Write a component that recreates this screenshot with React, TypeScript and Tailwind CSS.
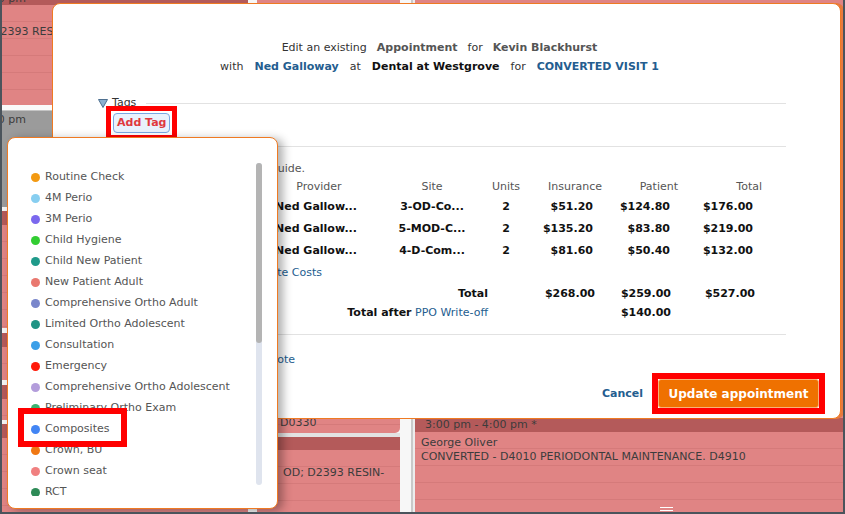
import React from "react";

const PINK =
  "bg-[repeating-linear-gradient(to_bottom,#e08484_0px,#e08484_16px,#d57a7a_16px,#d57a7a_17px)]";

const tags: [string, string][] = [
  ["Routine Check", "bg-[#f39a12]"],
  ["4M Perio", "bg-[#87cef0]"],
  ["3M Perio", "bg-[#7b68ee]"],
  ["Child Hygiene", "bg-[#32cd32]"],
  ["Child New Patient", "bg-[#1f9a8a]"],
  ["New Patient Adult", "bg-[#e9786f]"],
  ["Comprehensive Ortho Adult", "bg-[#7986cb]"],
  ["Limited Ortho Adolescent", "bg-[#1f9384]"],
  ["Consultation", "bg-[#3b9fe8]"],
  ["Emergency", "bg-[#ff1a0a]"],
  ["Comprehensive Ortho Adolescent", "bg-[#b39ddb]"],
  ["Preliminary Ortho Exam", "bg-[#3cb371]"],
  ["Composites", "bg-[#4285f4]"],
  ["Crown, BU", "bg-[#f07814]"],
  ["Crown seat", "bg-[#f08080]"],
  ["RCT", "bg-[#2e8b57]"],
  ["Bridge", "bg-[#9c27b0]"],
];

const rows = [
  ["D2391", "Ned Gallow...", "3-OD-Co...", "2", "$51.20", "$124.80", "$176.00"],
  ["D2392", "Ned Gallow...", "5-MOD-C...", "2", "$135.20", "$83.80", "$219.00"],
  ["D2391", "Ned Gallow...", "4-D-Com...", "2", "$81.60", "$50.40", "$132.00"],
];

function Background() {
  return (
    <div className="flex h-full text-[11px] leading-[14px] text-[#3c3c3c]">
      {/* column A1 */}
      <div className="w-[246px] flex flex-col">
        <div className="h-[5px] bg-[#b45a5a] overflow-hidden">
          <div className="-mt-[8px] -ml-[22px] whitespace-nowrap">3:00 pm *</div>
        </div>
        <div className={`h-[100px] ${PINK} pt-[20px] overflow-hidden`}>
          <div className="-ml-[10px] whitespace-nowrap">D2393 RESIN-BASED COMPOSITE</div>
        </div>
        <div className="h-[6px] bg-[#fafafa] border-b border-[#c4c4c4]" />
        <div className="h-[96px] bg-[#9b9b9b] pt-[2px] overflow-hidden">
          <div className="-ml-[22px] whitespace-nowrap">3:00 pm</div>
        </div>
        <div className="h-[4px] bg-[#f4f4f4]" />
        <div className="h-[14px] bg-[#b45a5a]" />
        <div className={`h-[103px] ${PINK}`} />
        <div className="h-[5px] bg-[#f4f4f4]" />
        <div className="h-[14px] bg-[#b45a5a]" />
        <div className={`h-[33px] ${PINK}`} />
        <div className="h-[5px] bg-[#f4f4f4]" />
        <div className="h-[14px] bg-[#b45a5a]" />
        <div className={`h-[21px] ${PINK}`} />
        <div className="h-[4px] bg-[#f4f4f4]" />
        <div className="h-[14px] bg-[#b45a5a]" />
        <div className={`flex-1 ${PINK}`} />
      </div>
      {/* separator */}
      <div className="w-[9px] bg-[#f6f6f6]" />
      {/* column A2 */}
      <div className="w-[143px] flex flex-col bg-[#f7f7f7]">
        <div className={`h-[433px] ${PINK} rounded-br-[5px] flex flex-col justify-end pb-[3px] pl-[23px]`}>
          <div className="whitespace-nowrap">D0330</div>
        </div>
        <div className="h-[4px] bg-[#e3e3e3]" />
        <div className="h-[13px] bg-[#b45a5a]" />
        <div className={`flex-1 ${PINK} pt-[16px] pl-[26px]`}>
          <div className="whitespace-nowrap">OD; D2393 RESIN-</div>
        </div>
      </div>
      {/* separator */}
      <div className="w-[15px] flex">
        <div className="w-[11px] bg-[#f7f7f7]" />
        <div className="w-[2px] bg-[#c9c9c9]" />
        <div className="w-[2px] bg-[#ececec]" />
      </div>
      {/* column B */}
      <div className="flex-1 flex flex-col">
        <div className={`h-[418px] ${PINK}`} />
        <div className="h-[14px] bg-[#b45a5a] pl-[10px] whitespace-nowrap">3:00 pm - 4:00 pm *</div>
        <div className={`flex-1 ${PINK} pt-[4px] pl-[6px]`}>
          <div className="whitespace-nowrap">George Oliver</div>
          <div className="whitespace-nowrap">CONVERTED - D4010 PERIODONTAL MAINTENANCE. D4910</div>
        </div>
      </div>
    </div>
  );
}

function Dialog() {
  const grid = "grid grid-cols-[164px_114px_112px_36px_78px_76px_84px] items-center";
  return (
    <div className="absolute left-[50px] top-[3px] w-[789px] h-[416px] bg-white border border-[#ef7a22] rounded-[8px] shadow-[3px_0_0_#e97a3d] flex flex-col text-[11px]">
      <div className="pl-[45px] pr-[54px] pt-[34px] flex flex-col">
        <div className="mr-[5px] flex flex-col items-center leading-[19px] text-[#333]">
          <div className="flex gap-[10px] whitespace-nowrap">
            <span>Edit an existing</span>
            <span className="font-bold text-[#555]">Appointment</span>
            <span>for</span>
            <span className="font-bold text-[#555]">Kevin Blackhurst</span>
          </div>
          <div className="flex gap-[11px] whitespace-nowrap">
            <span>with</span>
            <span className="font-bold text-[#245d8f]">Ned Galloway</span>
            <span>at</span>
            <span className="font-bold text-[#111]">Dental at Westgrove</span>
            <span>for</span>
            <span className="font-bold text-[#245d8f]">CONVERTED VISIT 1</span>
          </div>
        </div>

        <div className="mt-[20px] h-[14px] flex items-center">
          <svg width="10" height="9" viewBox="0 0 10 9">
            <polygon points="0.5,0.5 9.5,0.5 5,8.5" fill="#8db0d0" stroke="#4f7090" strokeWidth="1" />
          </svg>
          <span className="ml-[4px] text-[#333] leading-[14px]">Tags</span>
          <div className="ml-[10px] flex-1 h-px bg-[#e2e2e2]" />
        </div>
        <div className="-mt-[4px] ml-[8px] self-start border-[5px] border-[#ff0000] p-[2px]">
          <div className="h-[20px] px-[3px] rounded-[4px] border border-[#7aa7e3] bg-[#e9f2fd] font-bold text-[#e0393e] leading-[18px] whitespace-nowrap">
            Add Tag
          </div>
        </div>
        <div className="mt-[6px] h-px bg-[#e2e2e2]" />

        <div className="mt-[15px] h-[14px] leading-[14px] flex">
          <div className="w-[207px] text-right whitespace-nowrap overflow-hidden text-[#555]">
            Estimates are only a guide.
          </div>
        </div>

        <div className={`${grid} mt-[2px] h-[18px] text-[#555]`}>
          <div className="text-center">Procedure</div>
          <div className="text-center">Provider</div>
          <div className="text-center">Site</div>
          <div className="text-center">Units</div>
          <div className="text-right">Insurance</div>
          <div className="text-right">Patient</div>
          <div className="text-right">Total</div>
        </div>
        {rows.map((r, i) => (
          <div key={i} className={`${grid} h-[22px] font-bold text-[#111] whitespace-nowrap`}>
            <div className="text-center">{r[0]}</div>
            <div className="text-left pl-[13px]">{r[1]}</div>
            <div className="text-center">{r[2]}</div>
            <div className="text-center">{r[3]}</div>
            <div className="text-right pr-[9px]">{r[4]}</div>
            <div className="text-right pr-[8px]">{r[5]}</div>
            <div className="text-right pr-[9px]">{r[6]}</div>
          </div>
        ))}
        <div className="h-[22px] flex items-center">
          <div className="w-[224px] text-right whitespace-nowrap overflow-hidden text-[#245d8f]">
            Recalculate Costs
          </div>
        </div>
        <div className={`${grid} h-[20px] font-bold text-[#111] whitespace-nowrap`}>
          <div className="col-span-3 text-right">Total</div>
          <div />
          <div className="text-right pr-[7px]">$268.00</div>
          <div className="text-right pr-[7px]">$259.00</div>
          <div className="text-right pr-[7px]">$527.00</div>
        </div>
        <div className={`${grid} h-[18px] text-[#111] whitespace-nowrap`}>
          <div className="col-span-3 text-right">
            <span className="font-bold">Total after</span> <span className="text-[#245d8f]">PPO Write-off</span>
          </div>
          <div />
          <div />
          <div className="text-right pr-[7px] font-bold">$140.00</div>
          <div />
        </div>
        <div className="mt-[12px] h-px bg-[#e2e2e2]" />
        <div className="mt-[18px] h-[14px] leading-[14px] flex">
          <div className="w-[197px] text-right whitespace-nowrap overflow-hidden text-[#245d8f]">
            Add Appointment Note
          </div>
        </div>
      </div>
      <div className="mt-[6px] flex justify-end items-center pr-[15px]">
        <span className="font-bold text-[#245d8f] mt-[2px]">Cancel</span>
        <div className="ml-[9px] border-[6px] border-[#ff0000]">
          <div className="w-[161px] h-[29px] bg-[#ef7100] border border-[#f7b27a] rounded-[3px] text-white font-bold text-[12px] flex items-center justify-center whitespace-nowrap">
            Update appointment
          </div>
        </div>
      </div>
    </div>
  );
}

function TagMenu() {
  return (
    <div className="absolute left-[5px] top-[137px] w-[271px] h-[372px] bg-white border border-[#ef7a22] rounded-[8px] shadow-[5px_2px_10px_rgba(0,0,0,0.32)] flex pl-[23px] pr-[15px] pt-[25px] text-[11px]">
      <div className="flex-1 mt-[4px] h-[329px] overflow-hidden">
        {tags.map(([n, c]) => (
          <div key={n} className="h-[21px] flex items-center gap-[5px] text-[#555] whitespace-nowrap">
            <span className={`w-[9px] h-[9px] rounded-full shrink-0 ${c}`} />
            {n}
          </div>
        ))}
      </div>
      <div className="w-[6px] h-[322px] rounded-full bg-[#dfe4ee]">
        <div className="h-[180px] rounded-full bg-[#b4b4b4]" />
      </div>
      <div className="absolute left-[10px] top-[270px] w-[109px] h-[39px] border-[6px] border-[#ff0000]" />
    </div>
  );
}

export default function App() {
  return (
    <div className="relative w-[845px] h-[514px] overflow-hidden border-l-2 border-r-2 border-b-2 border-[#4b545c] font-['DejaVu_Sans',sans-serif]">
      <Background />
      <div className="absolute left-[658px] top-[507px] w-[13px] h-[4px] border-y border-white" />
      <Dialog />
      <TagMenu />
    </div>
  );
}
